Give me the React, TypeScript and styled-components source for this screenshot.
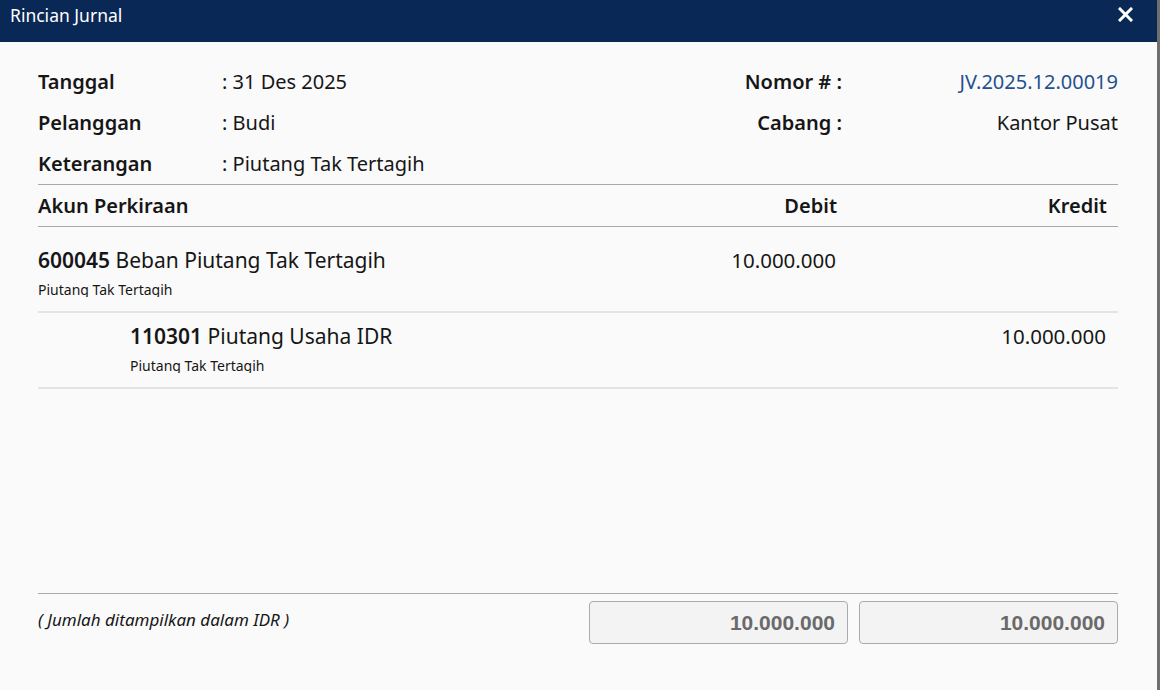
import styled, { createGlobalStyle } from "styled-components";

const GlobalStyle = createGlobalStyle`
  html, body {
    margin: 0;
    padding: 0;
    background: #fafafa;
  }
  * {
    box-sizing: border-box;
  }
`;

const lines = [
  {
    code: "600045",
    name: "Beban Piutang Tak Tertagih",
    memo: "Piutang Tak Tertagih",
    debit: "10.000.000",
    credit: "",
  },
  {
    code: "110301",
    name: "Piutang Usaha IDR",
    memo: "Piutang Tak Tertagih",
    debit: "",
    credit: "10.000.000",
  },
];

function App() {
  return (
    <>
      <GlobalStyle />
      <Dialog>
        <TitleBar>
          <Title>Rincian Jurnal</Title>
          <CloseButton aria-label="Tutup">
            <svg width="15" height="15" viewBox="0 0 15 15">
              <path
                d="M2 2L13 13M13 2L2 13"
                stroke="#fff"
                strokeWidth="3"
                strokeLinecap="square"
              />
            </svg>
          </CloseButton>
        </TitleBar>

        <Body>
          <InfoGrid>
            <Label>Tanggal</Label>
            <Value>: 31 Des 2025</Value>
            <Label $right>Nomor # :</Label>
            <Value $right $link>
              JV.2025.12.00019
            </Value>

            <Label>Pelanggan</Label>
            <Value>: Budi</Value>
            <Label $right>Cabang :</Label>
            <Value $right>Kantor Pusat</Value>

            <Label>Keterangan</Label>
            <Value>: Piutang Tak Tertagih</Value>
            <span />
            <span />
          </InfoGrid>

          <Table>
            <TableHead>
              <HeadCell>Akun Perkiraan</HeadCell>
              <HeadCell $right>Debit</HeadCell>
              <HeadCell $right>Kredit</HeadCell>
            </TableHead>
            <LineList>
              {lines.map((line) => (
                <Line key={line.code}>
                  <Account $indent={line.credit !== ""}>
                    <AccountName>
                      <strong>{line.code}</strong> {line.name}
                    </AccountName>
                    <Memo>{line.memo}</Memo>
                  </Account>
                  <Amount>{line.debit}</Amount>
                  <Amount>{line.credit}</Amount>
                </Line>
              ))}
            </LineList>
          </Table>

          <Footer>
            <Note>( Jumlah ditampilkan dalam IDR )</Note>
            <TotalBox>10.000.000</TotalBox>
            <TotalBox>10.000.000</TotalBox>
          </Footer>
        </Body>
      </Dialog>
    </>
  );
}

export default App;

const font = `"Noto Sans", "Open Sans", sans-serif`;

const Dialog = styled.div`
  width: 1160px;
  height: 690px;
  display: flex;
  flex-direction: column;
  background: #fafafa;
  border-right: 3px solid #6f6f6f;
  font-family: ${font};
  color: #161616;
`;

const TitleBar = styled.div`
  height: 42px;
  flex-shrink: 0;
  background: #0a2856;
  display: flex;
  justify-content: space-between;
  align-items: flex-start;
  padding: 3px 24px 0 10px;
`;

const Title = styled.span`
  color: #fff;
  font-size: 17.5px;
  line-height: 24px;
`;

const CloseButton = styled.button`
  border: none;
  background: none;
  padding: 0;
  margin-top: 4px;
  display: flex;
  cursor: pointer;
`;

const Body = styled.div`
  flex: 1;
  display: flex;
  flex-direction: column;
  padding: 19px 39px 46px 38px;
`;

const InfoGrid = styled.div`
  display: grid;
  grid-template-columns: 184px 1fr auto 276px;
  grid-auto-rows: 41px;
  align-items: center;
`;

const Label = styled.span<{ $right?: boolean }>`
  font-size: 20px;
  font-weight: 600;
  text-align: ${(p) => (p.$right ? "right" : "left")};
`;

const Value = styled.span<{ $right?: boolean; $link?: boolean }>`
  font-size: 20px;
  text-align: ${(p) => (p.$right ? "right" : "left")};
  color: ${(p) => (p.$link ? "#24508f" : "#161616")};
`;

const Table = styled.div`
  flex: 1;
  display: flex;
  flex-direction: column;
  border-top: 1px solid #a8a8a8;
`;

const TableHead = styled.div`
  display: grid;
  grid-template-columns: 1fr 259px 259px;
  column-gap: 11px;
  height: 42px;
  align-items: center;
  border-bottom: 1px solid #a8a8a8;
`;

const HeadCell = styled.span<{ $right?: boolean }>`
  font-size: 20px;
  font-weight: 600;
  text-align: ${(p) => (p.$right ? "right" : "left")};
  padding-right: ${(p) => (p.$right ? "11px" : "0")};
`;

const LineList = styled.div`
  flex: 1;
  padding-top: 10px;
`;

const Line = styled.div`
  display: grid;
  grid-template-columns: 1fr 259px 259px;
  column-gap: 11px;
  padding: 10px 0 14px;
  border-bottom: 2px solid #e4e4e4;
`;

const Account = styled.div<{ $indent?: boolean }>`
  display: flex;
  flex-direction: column;
  gap: 7px;
  padding-left: ${(p) => (p.$indent ? "92px" : "0")};
`;

const AccountName = styled.span`
  font-size: 21px;
  line-height: 26px;
  strong {
    font-weight: 600;
  }
`;

const Memo = styled.span`
  font-size: 14px;
  line-height: 19px;
  height: 17px;
  overflow: hidden;
`;

const Amount = styled.span`
  font-size: 20.5px;
  line-height: 26px;
  text-align: right;
  padding-right: 12px;
`;

const Footer = styled.div`
  display: grid;
  grid-template-columns: 1fr 259px 259px;
  column-gap: 11px;
  padding-top: 7px;
  border-top: 1px solid #a8a8a8;
`;

const Note = styled.span`
  font-size: 17px;
  font-style: italic;
  line-height: 24px;
  padding-top: 7px;
`;

const TotalBox = styled.div`
  height: 43px;
  border: 1px solid #ababab;
  border-radius: 4px;
  background: #f3f3f3;
  display: flex;
  align-items: center;
  justify-content: flex-end;
  padding-right: 12px;
  font-family: "Liberation Sans", Arial, sans-serif;
  font-size: 21px;
  font-weight: 700;
  color: #6a6a6a;
`;
